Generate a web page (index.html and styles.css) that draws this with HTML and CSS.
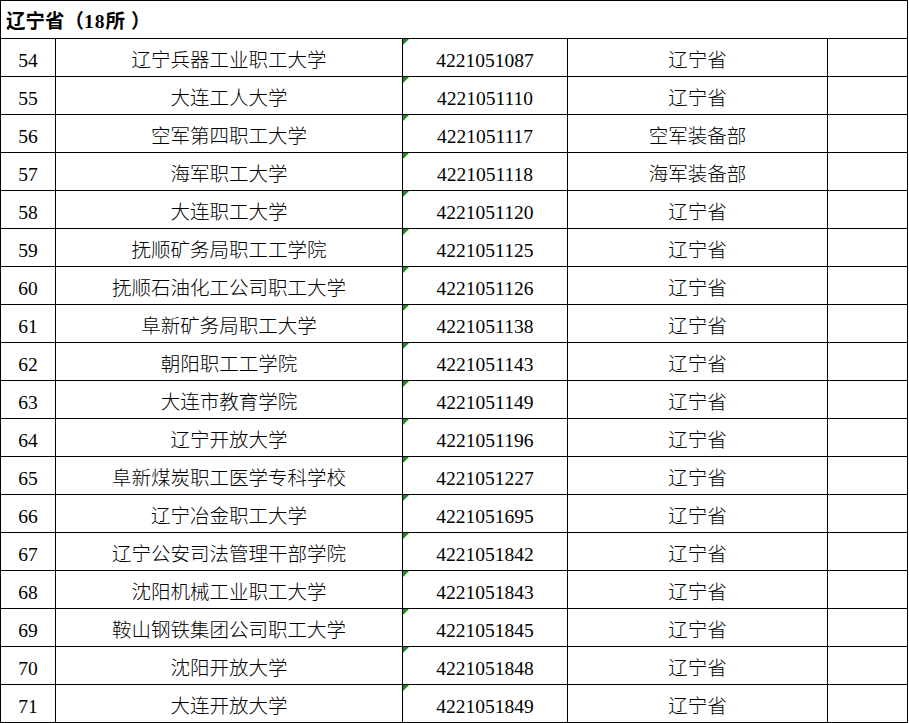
FILE: index.html
```html
<!DOCTYPE html>
<html lang="zh-CN">
<head>
<meta charset="utf-8">
<title>辽宁省（18所）</title>
<link rel="stylesheet" href="styles.css">
</head>
<body>
<table class="sheet">
  <colgroup>
    <col class="c-no">
    <col class="c-name">
    <col class="c-code">
    <col class="c-dept">
    <col class="c-note">
  </colgroup>
  <tbody>
    <tr class="group"><td colspan="5">辽宁省（<span class="num">18</span>所<span class="close">）</span></td></tr>
    <tr><td>54</td><td>辽宁兵器工业职工大学</td><td class="code">4221051087</td><td>辽宁省</td><td></td></tr>
    <tr><td>55</td><td>大连工人大学</td><td class="code">4221051110</td><td>辽宁省</td><td></td></tr>
    <tr><td>56</td><td>空军第四职工大学</td><td class="code">4221051117</td><td>空军装备部</td><td></td></tr>
    <tr><td>57</td><td>海军职工大学</td><td class="code">4221051118</td><td>海军装备部</td><td></td></tr>
    <tr><td>58</td><td>大连职工大学</td><td class="code">4221051120</td><td>辽宁省</td><td></td></tr>
    <tr><td>59</td><td>抚顺矿务局职工工学院</td><td class="code">4221051125</td><td>辽宁省</td><td></td></tr>
    <tr><td>60</td><td>抚顺石油化工公司职工大学</td><td class="code">4221051126</td><td>辽宁省</td><td></td></tr>
    <tr><td>61</td><td>阜新矿务局职工大学</td><td class="code">4221051138</td><td>辽宁省</td><td></td></tr>
    <tr><td>62</td><td>朝阳职工工学院</td><td class="code">4221051143</td><td>辽宁省</td><td></td></tr>
    <tr><td>63</td><td>大连市教育学院</td><td class="code">4221051149</td><td>辽宁省</td><td></td></tr>
    <tr><td>64</td><td>辽宁开放大学</td><td class="code">4221051196</td><td>辽宁省</td><td></td></tr>
    <tr><td>65</td><td>阜新煤炭职工医学专科学校</td><td class="code">4221051227</td><td>辽宁省</td><td></td></tr>
    <tr><td>66</td><td>辽宁冶金职工大学</td><td class="code">4221051695</td><td>辽宁省</td><td></td></tr>
    <tr><td>67</td><td>辽宁公安司法管理干部学院</td><td class="code">4221051842</td><td>辽宁省</td><td></td></tr>
    <tr><td>68</td><td>沈阳机械工业职工大学</td><td class="code">4221051843</td><td>辽宁省</td><td></td></tr>
    <tr><td>69</td><td>鞍山钢铁集团公司职工大学</td><td class="code">4221051845</td><td>辽宁省</td><td></td></tr>
    <tr><td>70</td><td>沈阳开放大学</td><td class="code">4221051848</td><td>辽宁省</td><td></td></tr>
    <tr><td>71</td><td>大连开放大学</td><td class="code">4221051849</td><td>辽宁省</td><td></td></tr>
  </tbody>
</table>
</body>
</html>
```
FILE: styles.css
```css
html, body {
  margin: 0;
  padding: 0;
  background: #ffffff;
}

.sheet {
  border-collapse: separate;
  border-spacing: 0;
  table-layout: fixed;
  width: 908px;
  border-top: 1px solid #000;
  border-left: 1px solid #000;
  font-family: "Liberation Serif", "Noto Sans CJK SC", serif;
  font-size: 19.5px;
  font-weight: 300;
  color: #000;
  text-spacing-trim: space-all;
}

.c-no { width: 55px; }
.c-name { width: 347px; }
.c-code { width: 165px; }
.c-dept { width: 260px; }
.c-note { width: 80px; }

.sheet td {
  box-sizing: border-box;
  height: 38px;
  padding: 7px 0 0 0;
  line-height: 30px;
  text-align: center;
  white-space: nowrap;
  overflow: hidden;
  border-right: 1px solid #000;
  border-bottom: 1px solid #000;
  vertical-align: top;
}

.sheet .group td {
  text-align: left;
  padding-left: 5px;
  padding-top: 6px;
  font-weight: 700;
}

.num {
  letter-spacing: 1px;
}

.close {
  padding-left: 6px;
}

.sheet td.code {
  position: relative;
  font-weight: 400;
}

.sheet td.code::before {
  content: "";
  position: absolute;
  top: 0;
  left: 0;
  width: 0;
  height: 0;
  border-top: 6px solid #1f8a1f;
  border-right: 6px solid transparent;
}
```
